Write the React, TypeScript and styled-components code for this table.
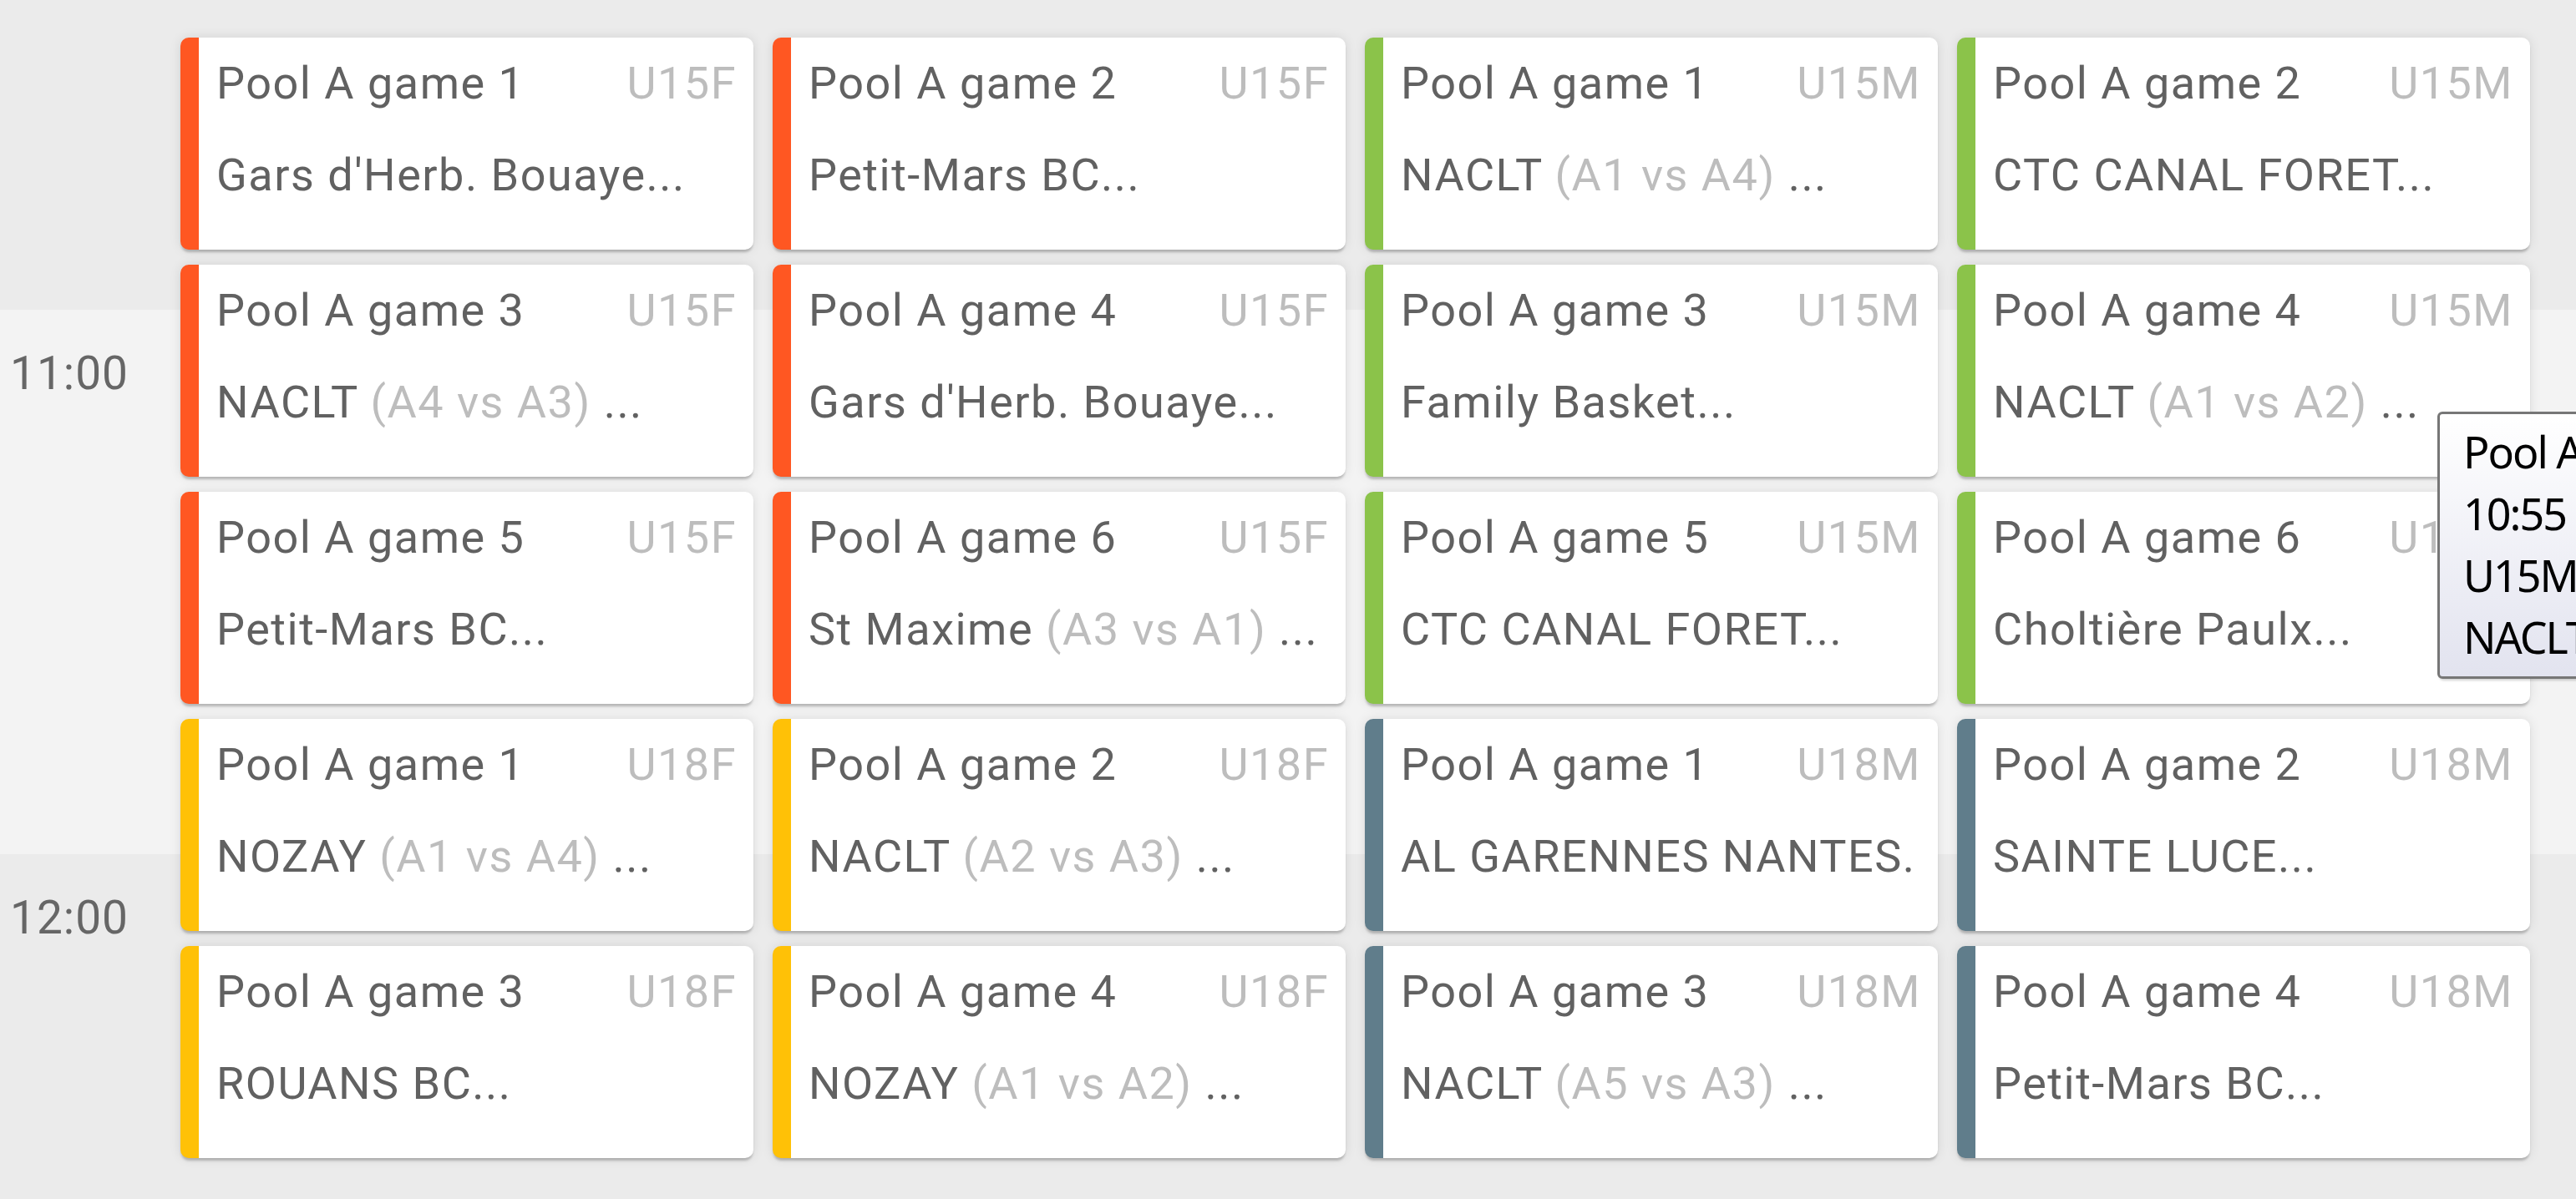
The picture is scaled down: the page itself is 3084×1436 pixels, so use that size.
import React from "react";
import styled, { createGlobalStyle } from "styled-components";

const GlobalStyle = createGlobalStyle`
  html, body {
    margin: 0;
    padding: 0;
    overflow: hidden;
    background: #ebebeb;
  }
  * { box-sizing: border-box; }
`;

type Division = "U15F" | "U15M" | "U18F" | "U18M";

const divisionColor: Record<Division, string> = {
  U15F: "#ff5722",
  U15M: "#8bc34a",
  U18F: "#ffc107",
  U18M: "#607d8b",
};

interface Game {
  title: string;
  division: Division;
  team: string;
  pairing?: string;
}

const rows: Game[][] = [
  [
    { title: "Pool A game 1", division: "U15F", team: "Gars d'Herb. Bouaye..." },
    { title: "Pool A game 2", division: "U15F", team: "Petit-Mars BC..." },
    { title: "Pool A game 1", division: "U15M", team: "NACLT", pairing: "(A1 vs A4)" },
    { title: "Pool A game 2", division: "U15M", team: "CTC CANAL FORET..." },
  ],
  [
    { title: "Pool A game 3", division: "U15F", team: "NACLT", pairing: "(A4 vs A3)" },
    { title: "Pool A game 4", division: "U15F", team: "Gars d'Herb. Bouaye..." },
    { title: "Pool A game 3", division: "U15M", team: "Family Basket..." },
    { title: "Pool A game 4", division: "U15M", team: "NACLT", pairing: "(A1 vs A2)" },
  ],
  [
    { title: "Pool A game 5", division: "U15F", team: "Petit-Mars BC..." },
    { title: "Pool A game 6", division: "U15F", team: "St Maxime", pairing: "(A3 vs A1)" },
    { title: "Pool A game 5", division: "U15M", team: "CTC CANAL FORET..." },
    { title: "Pool A game 6", division: "U15M", team: "Choltière Paulx..." },
  ],
  [
    { title: "Pool A game 1", division: "U18F", team: "NOZAY", pairing: "(A1 vs A4)" },
    { title: "Pool A game 2", division: "U18F", team: "NACLT", pairing: "(A2 vs A3)" },
    { title: "Pool A game 1", division: "U18M", team: "AL GARENNES NANTES." },
    { title: "Pool A game 2", division: "U18M", team: "SAINTE LUCE..." },
  ],
  [
    { title: "Pool A game 3", division: "U18F", team: "ROUANS BC..." },
    { title: "Pool A game 4", division: "U18F", team: "NOZAY", pairing: "(A1 vs A2)" },
    { title: "Pool A game 3", division: "U18M", team: "NACLT", pairing: "(A5 vs A3)" },
    { title: "Pool A game 4", division: "U18M", team: "Petit-Mars BC..." },
  ],
];

const hours = ["10:00", "11:00", "12:00"];

const Viewport = styled.div`
  position: relative;
  width: 3084px;
  height: 1436px;
  overflow: hidden;
  font-family: Roboto, "Liberation Sans", Arial, sans-serif;
`;

const Timeline = styled.div`
  display: flex;
  flex-direction: column;
  margin-top: -281px;
`;

const HourBand = styled.div<{ $light: boolean }>`
  height: 652px;
  background: ${(p) => (p.$light ? "#f3f3f3" : "#ebebeb")};
  padding: 44px 0 0 12px;
`;

const TimeLabel = styled.div`
  font-size: 55px;
  line-height: 64px;
  letter-spacing: 1px;
  color: #666666;
`;

const EventLayer = styled.div`
  position: absolute;
  inset: 0;
  display: grid;
  grid-template-columns: repeat(4, 686px);
  grid-auto-rows: 254px;
  column-gap: 23px;
  row-gap: 18px;
  padding: 45px 0 0 216px;
  align-content: start;
`;

const Card = styled.div<{ $color: string }>`
  display: flex;
  flex-direction: column;
  background: #ffffff;
  border-left: 22px solid ${(p) => p.$color};
  border-radius: 10px;
  box-shadow: 0 4px 3px -1px rgba(0, 0, 0, 0.22), 0 0 14px rgba(0, 0, 0, 0.1);
  padding: 0 20px 0 21px;
  font-size: 54px;
  letter-spacing: 1.5px;
  color: #616161;
  overflow: hidden;
`;

const CardHeader = styled.div`
  display: flex;
  justify-content: space-between;
  line-height: 110px;
  white-space: nowrap;
`;

const DivisionTag = styled.span`
  color: #bdbdbd;
`;

const Teams = styled.div`
  line-height: 110px;
  white-space: nowrap;
  overflow: hidden;
`;

const Pairing = styled.span`
  color: #bdbdbd;
`;

const Tooltip = styled.div`
  position: absolute;
  left: 2918px;
  top: 493px;
  width: 420px;
  height: 320px;
  border: 3px solid #767676;
  border-radius: 6px;
  background: linear-gradient(to bottom, #ffffff 0%, #e2e3ef 100%);
  box-shadow: 2px 2px 3px rgba(0, 0, 0, 0.18);
  padding: 8px 0 0 28px;
  font-family: "Noto Sans", "DejaVu Sans", sans-serif;
  font-size: 52px;
  letter-spacing: -2px;
  line-height: 74px;
  color: #000000;
  white-space: nowrap;
`;

const TooltipLine = styled.div``;

function GameCard({ game }: { game: Game }) {
  return (
    <Card $color={divisionColor[game.division]}>
      <CardHeader>
        <span>{game.title}</span>
        <DivisionTag>{game.division}</DivisionTag>
      </CardHeader>
      <Teams>
        {game.team}
        {game.pairing && (
          <>
            {" "}
            <Pairing>{game.pairing}</Pairing> ...
          </>
        )}
      </Teams>
    </Card>
  );
}

export default function App() {
  return (
    <>
      <GlobalStyle />
      <Viewport>
        <Timeline>
          {hours.map((h, i) => (
            <HourBand key={h} $light={i % 2 === 1}>
              <TimeLabel>{h}</TimeLabel>
            </HourBand>
          ))}
        </Timeline>
        <EventLayer>
          {rows.flat().map((g, i) => (
            <GameCard key={i} game={g} />
          ))}
        </EventLayer>
        <Tooltip>
          <TooltipLine>Pool A game 4</TooltipLine>
          <TooltipLine>10:55 Salle 2</TooltipLine>
          <TooltipLine>U15M</TooltipLine>
          <TooltipLine>NACLT (A1 vs A2) ...</TooltipLine>
        </Tooltip>
      </Viewport>
    </>
  );
}
